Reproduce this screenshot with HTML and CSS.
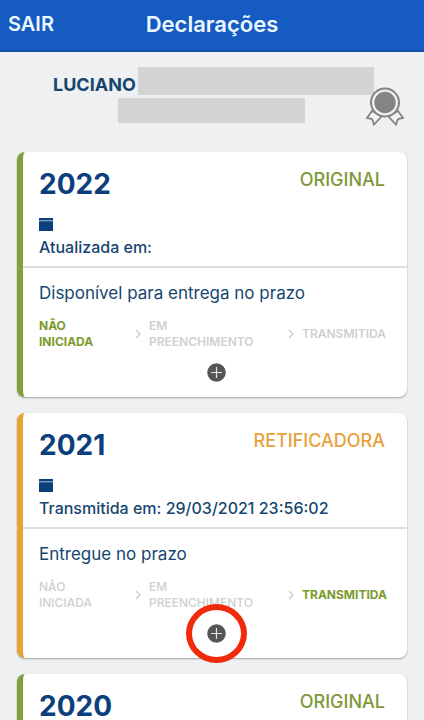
FILE: index.html
```html
<!DOCTYPE html>
<html lang="pt-BR">
<head>
<meta charset="utf-8">
<meta name="viewport" content="width=device-width, initial-scale=1">
<title>Declarações</title>
<link rel="stylesheet" href="styles.css">
</head>
<body>
<div class="app">
  <header class="topbar">
    <button class="exit" type="button">SAIR</button>
    <h1 class="title">Declarações</h1>
  </header>
  <section class="profile">
    <div class="name-row"><span class="name">LUCIANO</span><span class="mask mask-long"></span></div>
    <span class="mask mask-short"></span>
    <svg class="medal" viewBox="0 0 40 40" aria-hidden="true">
      <g fill="#f4f5f6" stroke="#858384" stroke-width="1.8" stroke-linejoin="miter">
        <path d="M7 24 L2 31 L7 32 L9 37.500 L16.500 29.500 Z"/>
        <path d="M33 24 L38 31 L33 32 L31 37.500 L23.500 29.500 Z"/>
      </g>
      <circle cx="20" cy="15.500" r="14" fill="#eff0f2" stroke="#858384" stroke-width="2"/>
      <circle cx="20" cy="15.500" r="10.700" fill="#858384"/>
    </svg>
  </section>
  <main class="cards">
    <article class="card green">
      <div class="summary">
        <div class="headline"><h2 class="year">2022</h2><span class="kind">ORIGINAL</span></div>
        <svg class="calendar" viewBox="0 0 14 13" aria-hidden="true"><path d="M0 0H14V13H0Z" fill="#0b407c"/><path d="M0 2.800H14" stroke="#d5e0ec" stroke-width=".8"/></svg>
        <p class="date">Atualizada em:</p>
      </div>
      <div class="details">
        <p class="status">Disponível para entrega no prazo</p>
        <ol class="steps">
          <li class="step active">NÃO<br>INICIADA</li>
          <li class="step"><svg class="chevron" viewBox="0 0 6 10" aria-hidden="true"><path d="M1 1L5 5L1 9"/></svg><span>EM<br>PREENCHIMENTO</span></li>
          <li class="step"><svg class="chevron" viewBox="0 0 6 10" aria-hidden="true"><path d="M1 1L5 5L1 9"/></svg><span>TRANSMITIDA</span></li>
        </ol>
        <button class="add" type="button" aria-label="Mais opções"><svg viewBox="0 0 19 19" aria-hidden="true"><circle cx="9.500" cy="9.500" r="9.300" fill="#555"/><path d="M9.500 4V15M4 9.500H15" stroke="#e4e4e4" stroke-width="1.200"/></svg></button>
      </div>
    </article>
    <article class="card orange">
      <div class="summary">
        <div class="headline"><h2 class="year">2021</h2><span class="kind">RETIFICADORA</span></div>
        <svg class="calendar" viewBox="0 0 14 13" aria-hidden="true"><path d="M0 0H14V13H0Z" fill="#0b407c"/><path d="M0 2.800H14" stroke="#d5e0ec" stroke-width=".8"/></svg>
        <p class="date">Transmitida em: 29/03/2021 23:56:02</p>
      </div>
      <div class="details">
        <p class="status">Entregue no prazo</p>
        <ol class="steps">
          <li class="step">NÃO<br>INICIADA</li>
          <li class="step"><svg class="chevron" viewBox="0 0 6 10" aria-hidden="true"><path d="M1 1L5 5L1 9"/></svg><span>EM<br>PREENCHIMENTO</span></li>
          <li class="step active"><svg class="chevron" viewBox="0 0 6 10" aria-hidden="true"><path d="M1 1L5 5L1 9"/></svg><span>TRANSMITIDA</span></li>
        </ol>
        <button class="add" type="button" aria-label="Mais opções"><svg viewBox="0 0 19 19" aria-hidden="true"><circle cx="9.500" cy="9.500" r="9.300" fill="#555"/><path d="M9.500 4V15M4 9.500H15" stroke="#e4e4e4" stroke-width="1.200"/></svg><span class="ring"></span></button>
      </div>
    </article>
    <article class="card green">
      <div class="summary">
        <div class="headline"><h2 class="year">2020</h2><span class="kind">ORIGINAL</span></div>
      </div>
    </article>
  </main>
</div>
</body>
</html>
```
FILE: styles.css
```css
* { box-sizing: border-box; }
body {
  margin: 0;
  background: #eff0f2;
  color: #164670;
  font-family: Inter, "Liberation Sans", sans-serif;
}
h1, h2, p, ol { margin: 0; padding: 0; }
button { padding: 0; border: 0; background: none; font: inherit; color: inherit; }
svg { display: block; }

.app { height: 100vh; overflow: hidden; }

.topbar {
  display: grid;
  grid-template-columns: 1fr auto 1fr;
  align-items: center;
  height: 52px;
  padding: 0 8px 2px;
  background: #165bc2;
  border-bottom: 2px solid #164fa6;
  color: #ecf8ff;
}
.exit { justify-self: start; font-size: 20px; line-height: 24px; font-weight: 600; }
.title { font-size: 22px; line-height: 28px; font-weight: 600; }

.profile {
  position: relative;
  display: flex;
  flex-direction: column;
  align-items: center;
  gap: 3px;
  padding: 15px 50px 0 53px;
}
.name-row { display: flex; gap: 2px; width: 100%; height: 28px; }
.name { font-size: 18px; line-height: 35px; font-weight: 700; }
.mask { background: #d4d4d4; }
.mask-long { flex: 1; }
.mask-short { width: 58%; height: 25px; margin-right: 4px; }
.medal { position: absolute; top: 35px; right: 19px; width: 40px; height: 40px; }

.cards { display: grid; gap: 16px; padding: 29px 17px 0; }
.card {
  background: #fff;
  border-left: 6px solid;
  border-radius: 8px;
  box-shadow: 0 1px 2px #0005;
}
.green { border-color: #80a03b; }
.orange { border-color: #e8a534; }

.summary { height: 116px; padding: 14px 22px 0 16px; border-bottom: 2px solid #dcdddf; }
.headline { display: flex; justify-content: space-between; align-items: flex-start; }
.year { font-size: 28px; line-height: 36px; font-weight: 700; color: #0b407c; }
.kind { font-size: 18px; line-height: 28px; font-weight: 500; }
.green .kind { color: #7d9838; }
.orange .kind { color: #eaa03c; }
.calendar { width: 14px; height: 13px; margin-top: 16px; }
.date { margin-top: 6px; font-size: 16px; line-height: 20px; font-weight: 500; }

.details { padding: 13px 13px 15px 16px; }
.status { font-size: 17px; line-height: 24px; }
.steps {
  display: grid;
  grid-template-columns: 96px 153px auto;
  align-items: center;
  margin-top: 13px;
  list-style: none;
  font-size: 12px;
  line-height: 16px;
  font-weight: 600;
  color: #cfcfcf;
}
.orange .steps { font-weight: 500; }
.step { display: flex; align-items: center; gap: 8px; }
.step.active { color: #7b9b2d; font-weight: 700; }
.chevron { width: 6px; height: 10px; fill: none; stroke: #ccc; stroke-width: 1.4; }
.add { position: relative; display: block; width: 19px; margin: 13px auto 0; }
.ring {
  position: absolute;
  inset: -20px -21px;
  border: 6px solid #f22a0c;
  border-radius: 50%;
}
```
